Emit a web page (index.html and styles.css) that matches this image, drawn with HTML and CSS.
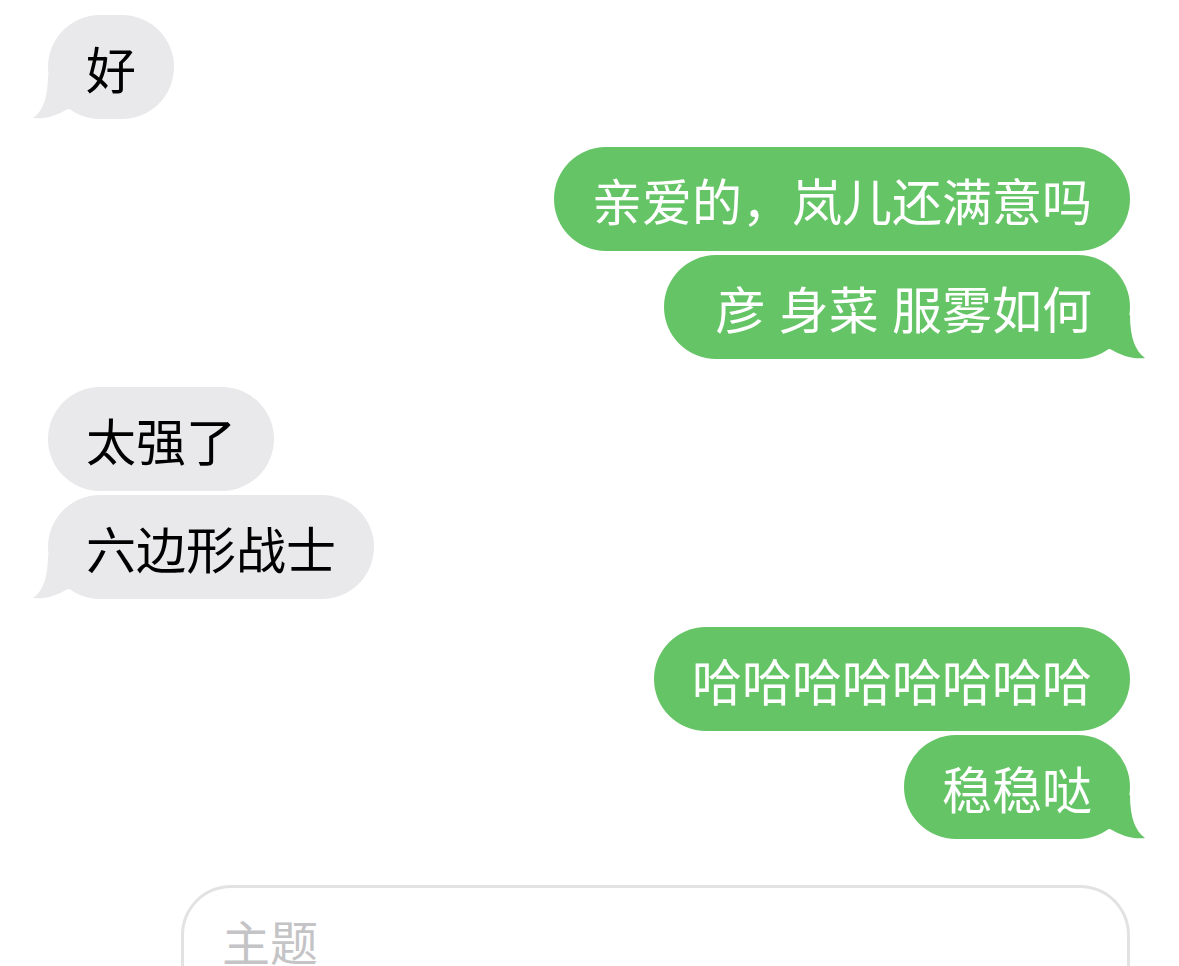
FILE: index.html
```html
<!DOCTYPE html>
<html lang="zh-CN">

<head>
    <meta charset="UTF-8" />
    <meta name="viewport" content="width=device-width, initial-scale=1" />
    <title>信息</title>
    <link rel="stylesheet" href="styles.css">
</head>

<body>
    <div class="chat">
        <div class="group">
            <div class="bubble them tail"><svg class="tail-svg" viewBox="0 0 40 44" width="40" height="44"><path d="M16,0 C16,22 11,36 1,43 C12,44.5 24,41 36,34 L40,34 L40,0 Z" /></svg>好</div>
        </div>
        <div class="group">
            <div class="bubble me">亲爱的，岚儿还满意吗</div>
            <div class="bubble me tail"><svg class="tail-svg" viewBox="0 0 40 44" width="40" height="44"><path d="M16,0 C16,22 11,36 1,43 C12,44.5 24,41 36,34 L40,34 L40,0 Z" /></svg>&nbsp;彦 身菜 服雾如何</div>
        </div>
        <div class="group">
            <div class="bubble them">太强了</div>
            <div class="bubble them tail"><svg class="tail-svg" viewBox="0 0 40 44" width="40" height="44"><path d="M16,0 C16,22 11,36 1,43 C12,44.5 24,41 36,34 L40,34 L40,0 Z" /></svg>六边形战士</div>
        </div>
        <div class="group">
            <div class="bubble me">哈哈哈哈哈哈哈哈</div>
            <div class="bubble me tail"><svg class="tail-svg" viewBox="0 0 40 44" width="40" height="44"><path d="M16,0 C16,22 11,36 1,43 C12,44.5 24,41 36,34 L40,34 L40,0 Z" /></svg>稳稳哒</div>
        </div>

        <div class="compose">
            <div class="subject">主题</div>
        </div>
    </div>
</body>

</html>
```

FILE: styles.css
```css
:root {
    --gray: #e9e9eb;
    --green: #65c466;
    --border: #e2e2e2;
    --hint: #c4c4c6;
}

body {
    margin: 0;
    background: #fff;
    font-family: "Noto Sans CJK SC", "Noto Sans", sans-serif;
    height: 966px;
    overflow: hidden;
}

.chat {
    display: flex;
    flex-direction: column;
    gap: 28px;
    padding: 15px 49px 0 48px;
}

.group {
    display: flex;
    flex-direction: column;
    gap: 4px;
}

.bubble {
    position: relative;
    padding: 22px 38px;
    font-size: 50px;
    line-height: 60px;
    word-spacing: 2px;
    border-radius: 52px;
    white-space: nowrap;
}

.them {
    align-self: flex-start;
    background: var(--gray);
    color: #000;
}

.me {
    align-self: flex-end;
    background: var(--green);
    color: #fff;
}

.tail-svg {
    display: none;
    position: absolute;
    bottom: 0;
}

.tail .tail-svg {
    display: block;
}

.them .tail-svg {
    left: -16px;
    fill: var(--gray);
}

.me .tail-svg {
    right: -16px;
    fill: var(--green);
    transform: scaleX(-1);
}

.compose {
    margin: 18px 0 0 133px;
    height: 120px;
    border: 3px solid var(--border);
    border-bottom: 0;
    border-radius: 50px 50px 0 0;
    padding: 22px 38px 0;
}

.subject {
    font-size: 48px;
    line-height: 60px;
    color: var(--hint);
}
```
